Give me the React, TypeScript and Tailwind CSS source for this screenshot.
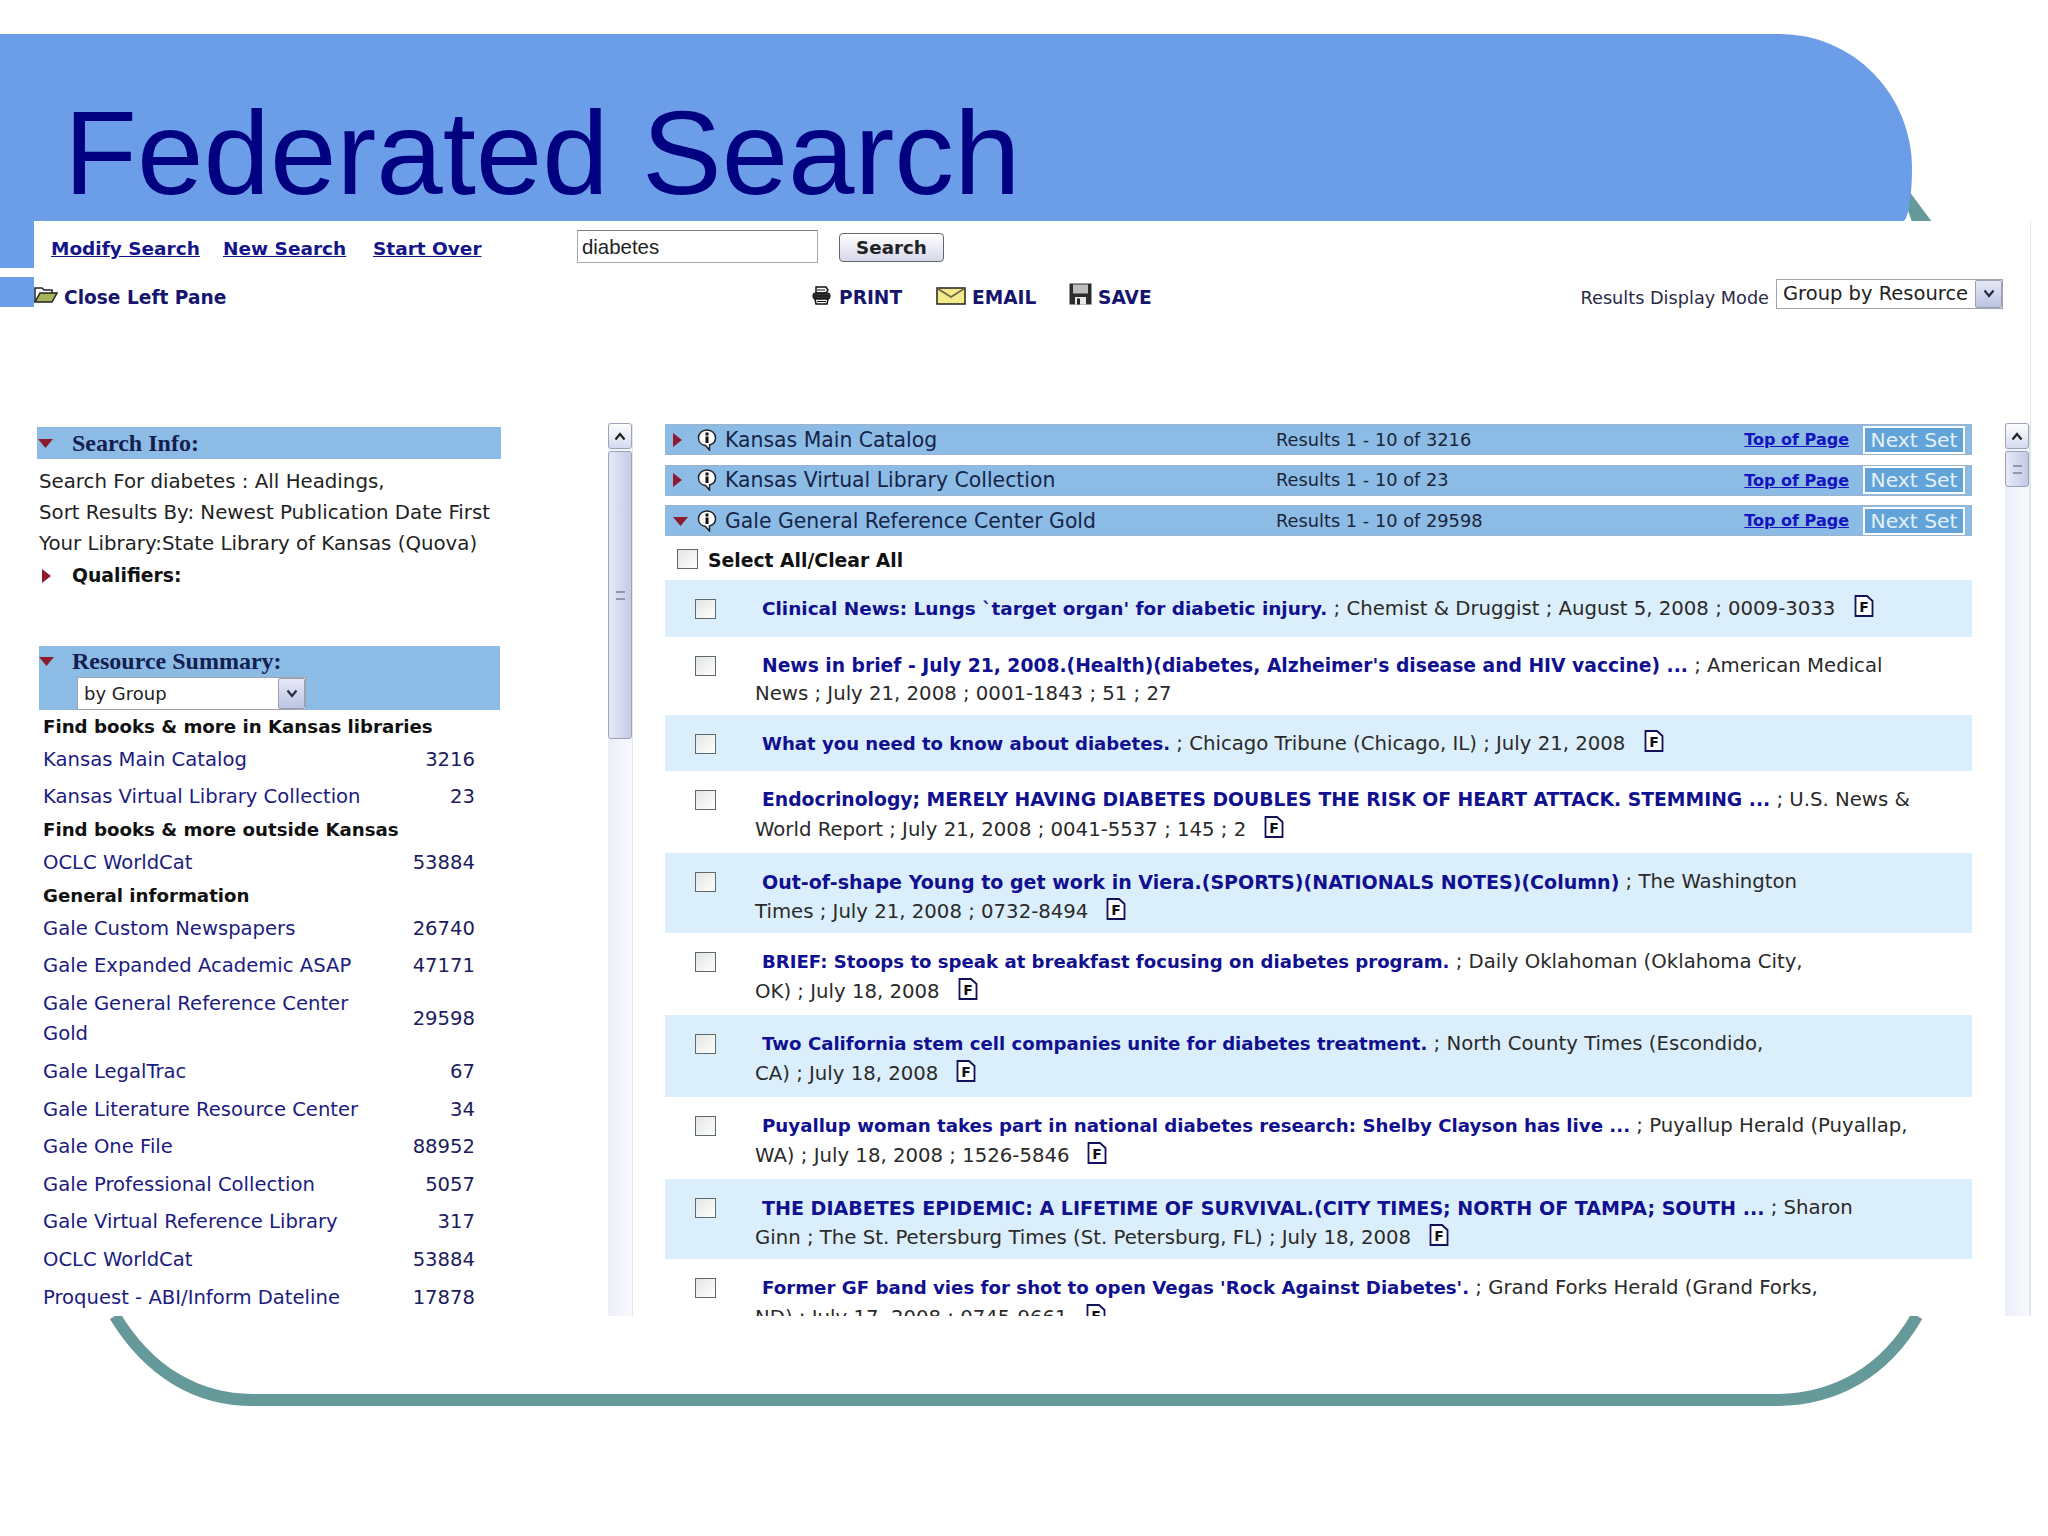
import React from "react";

const verdana = "font-['DejaVu_Sans',Verdana,sans-serif]";

const groups: { heading: string; h: string; links: { name: string[]; count: string; h?: string }[] }[] = [
  {
    heading: "Find books & more in Kansas libraries",
    h: "h-[31.5px] pt-[2px]",
    links: [
      { name: ["Kansas Main Catalog"], count: "3216", h: "h-[37px]" },
      { name: ["Kansas Virtual Library Collection"], count: "23", h: "h-[37px]" },
    ],
  },
  {
    heading: "Find books & more outside Kansas",
    h: "h-[29px]",
    links: [{ name: ["OCLC WorldCat"], count: "53884", h: "h-[36.5px]" }],
  },
  {
    heading: "General information",
    h: "h-[29px]",
    links: [
      { name: ["Gale Custom Newspapers"], count: "26740" },
      { name: ["Gale Expanded Academic ASAP"], count: "47171" },
      { name: ["Gale General Reference Center", "Gold"], count: "29598", h: "h-[68px]" },
      { name: ["Gale LegalTrac"], count: "67" },
      { name: ["Gale Literature Resource Center"], count: "34" },
      { name: ["Gale One File"], count: "88952" },
      { name: ["Gale Professional Collection"], count: "5057" },
      { name: ["Gale Virtual Reference Library"], count: "317" },
      { name: ["OCLC WorldCat"], count: "53884" },
      { name: ["Proquest - ABI/Inform Dateline"], count: "17878" },
    ],
  },
];

const bars = [
  { name: "Kansas Main Catalog", results: "Results 1 - 10 of 3216", open: false },
  { name: "Kansas Virtual Library Collection", results: "Results 1 - 10 of 23", open: false },
  { name: "Gale General Reference Center Gold", results: "Results 1 - 10 of 29598", open: true },
];

// title sizes differ a little per row, the capitals in the source run wider than DejaVu's
const rows = [
  { h: "h-[57px]", size: "text-[18.470px]", title: "Clinical News: Lungs `target organ' for diabetic injury.", rest: " ; Chemist & Druggist ; August 5, 2008 ; 0009-3033", doc: 1 },
  { h: "h-[78px]", size: "text-[18.730px]", title: "News in brief - July 21, 2008.(Health)(diabetes, Alzheimer's disease and HIV vaccine) ...", rest: " ; American Medical", line2: "News ; July 21, 2008 ; 0001-1843 ; 51 ; 27", doc: 0, tight: true },
  { h: "h-[56px]", size: "text-[18.080px]", title: "What you need to know about diabetes.", rest: " ; Chicago Tribune (Chicago, IL) ; July 21, 2008", doc: 1 },
  { h: "h-[82px]", size: "text-[18.770px]", title: "Endocrinology; MERELY HAVING DIABETES DOUBLES THE RISK OF HEART ATTACK. STEMMING ...", rest: " ; U.S. News &", line2: "World Report ; July 21, 2008 ; 0041-5537 ; 145 ; 2", doc: 2 },
  { h: "h-[80px]", size: "text-[19.060px]", title: "Out-of-shape Young to get work in Viera.(SPORTS)(NATIONALS NOTES)(Column)", rest: " ; The Washington", line2: "Times ; July 21, 2008 ; 0732-8494", doc: 2 },
  { h: "h-[82px]", size: "text-[18.120px]", title: "BRIEF: Stoops to speak at breakfast focusing on diabetes program.", rest: " ; Daily Oklahoman (Oklahoma City,", line2: "OK) ; July 18, 2008", doc: 2 },
  { h: "h-[82px]", size: "text-[18.140px]", title: "Two California stem cell companies unite for diabetes treatment.", rest: " ; North County Times (Escondido,", line2: "CA) ; July 18, 2008", doc: 2 },
  { h: "h-[82px]", size: "text-[18.200px]", title: "Puyallup woman takes part in national diabetes research: Shelby Clayson has live ...", rest: " ; Puyallup Herald (Puyallap,", line2: "WA) ; July 18, 2008 ; 1526-5846", doc: 2 },
  { h: "h-[80px]", size: "text-[19.070px]", title: "THE DIABETES EPIDEMIC: A LIFETIME OF SURVIVAL.(CITY TIMES; NORTH OF TAMPA; SOUTH ...", rest: " ; Sharon", line2: "Ginn ; The St. Petersburg Times (St. Petersburg, FL) ; July 18, 2008", doc: 2 },
  { h: "h-[82px]", size: "text-[18.200px]", title: "Former GF band vies for shot to open Vegas 'Rock Against Diabetes'.", rest: " ; Grand Forks Herald (Grand Forks,", line2: "ND) ; July 17, 2008 ; 0745-9661", doc: 2 },
];

function DownTri() {
  return (
    <svg width="16" height="10" viewBox="0 0 16 10" className="shrink-0">
      <path d="M0 1 L15 1 L7.500 10 Z" fill="#8c1c2c" />
    </svg>
  );
}

function RightTri() {
  return (
    <svg width="9" height="14" viewBox="0 0 9 14" className="shrink-0">
      <path d="M0 0 L9 7 L0 14 Z" fill="#8c1c2c" />
    </svg>
  );
}

function InfoIcon() {
  return (
    <svg width="20" height="22" viewBox="0 0 20 22" className="shrink-0">
      <path d="M10 1 C5 1 1.500 4.500 1.500 9 C1.500 13 4.500 16 8.500 16.500 L12.500 21 L12.500 16 C16 15 18.500 12.500 18.500 9 C18.500 4.500 15 1 10 1 Z" fill="#fff" stroke="#222" strokeWidth="1.500" />
      <rect x="8.500" y="3.500" width="3" height="3" fill="#111" />
      <rect x="8.500" y="7.500" width="3" height="6.500" fill="#111" />
    </svg>
  );
}

function DocIcon() {
  return (
    <svg width="20" height="22" viewBox="0 0 20 22" className="inline-block shrink-0">
      <path d="M1.500 1 L13 1 L18.500 6 L18.500 21 L1.500 21 Z" fill="#fff" stroke="#11115a" strokeWidth="1.800" />
      <text x="10" y="17" textAnchor="middle" fontSize="14" fontWeight="700" fontFamily="DejaVu Sans" fill="#111">F</text>
    </svg>
  );
}

function Checkbox() {
  return <span className="block w-[21px] h-[20px] border border-[#5a6a70] bg-gradient-to-br from-[#e4e4e0] to-white shrink-0" />;
}

function SelectArrow() {
  return (
    <span className="w-[27px] self-stretch flex items-center justify-center bg-gradient-to-b from-[#e6e8f6] to-[#bcc4e0] border border-[#9aa0b0] rounded-[2px]">
      <svg width="12" height="9" viewBox="0 0 12 9">
        <path d="M1.500 1.500 L6 7 L10.500 1.500" fill="none" stroke="#2a2a44" strokeWidth="2.200" />
      </svg>
    </span>
  );
}

function Scrollbar({ thumb }: { thumb: string }) {
  return (
    <div className="w-[25px] h-full flex flex-col bg-gradient-to-r from-[#eceff8] to-[#f8f9fd] border-r border-[#e4e6ee]">
      <div className="h-[26px] shrink-0 flex items-center justify-center bg-gradient-to-b from-white to-[#d4daf0] border border-[#9da3b4] rounded-[3px]">
        <svg width="12" height="9" viewBox="0 0 12 9">
          <path d="M1.500 7.500 L6 2 L10.500 7.500" fill="none" stroke="#222" strokeWidth="2.200" />
        </svg>
      </div>
      <div className={`${thumb} mt-[2px] shrink-0 flex items-center justify-center bg-gradient-to-r from-[#e6e9f8] to-[#c4cbe6] border border-[#9da3b4] rounded-[3px]`}>
        <span className="w-[9px] h-[9px] border-y-2 border-double border-[#9298ae]" />
      </div>
    </div>
  );
}

function Sidebar() {
  return (
    <div className="w-[574px] shrink-0 pt-[4px] pl-[3px]">
      <div className="w-[464px] h-[32px] bg-[#8cbce6] flex items-center">
        <span className="ml-[1px] w-[34px]"><DownTri /></span>
        <span className="font-['Liberation_Serif',serif] font-bold text-[24px] text-[#13204f]">Search Info:</span>
      </div>
      <div className={`${verdana} pt-[7px] pl-[2px] text-[19.800px] text-[#222] leading-[31px] whitespace-nowrap`}>
        <div>Search For diabetes : All Headings,</div>
        <div>Sort Results By: Newest Publication Date First</div>
        <div>Your Library:State Library of Kansas (Quova)</div>
        <div className="flex items-center font-bold text-[18.800px] text-[#111] pt-[1px]">
          <span className="w-[33px] pl-[3px]"><RightTri /></span>
          Qualifiers:
        </div>
      </div>
      <div className="mt-[55px] ml-[2px] w-[461px] h-[64px] bg-[#8cbce6]">
        <div className="flex items-center h-[30px]">
          <span className="w-[33px]"><DownTri /></span>
          <span className="font-['Liberation_Serif',serif] font-bold text-[24px] text-[#13204f]">Resource Summary:</span>
        </div>
        <div className="ml-[38px] mt-[1px] w-[229px] h-[33px] flex bg-white border border-[#a0a4ac]">
          <span className={`${verdana} flex-1 pl-[6px] text-[18px] leading-[32px] text-[#222]`}>by Group</span>
          <SelectArrow />
        </div>
      </div>
      <div className={`${verdana} ml-[2px] w-[436px] text-[19.600px] whitespace-nowrap`}>
        {groups.map((g) => (
          <div key={g.heading}>
            <div className={`${g.h} pl-[4px] flex items-center font-bold text-[18.200px] text-[#111]`}>{g.heading}</div>
            {g.links.map((l) => (
              <div key={l.count + l.name[0]} className={`${l.h ?? "h-[37.6px]"} pl-[4px] flex items-center justify-between leading-[30px]`}>
                <span className="text-[#1c1c80]">
                  {l.name.map((n) => (
                    <div key={n}>{n}</div>
                  ))}
                </span>
                <span className="text-[#1c1c5e]">{l.count}</span>
              </div>
            ))}
          </div>
        ))}
      </div>
    </div>
  );
}

function ResultBars() {
  return (
    <div className={`${verdana} flex flex-col gap-[9.500px] whitespace-nowrap`}>
      {bars.map((b) => (
        <div key={b.name} className="h-[31px] bg-[#8cbce6] border-y border-[#9cb2c8] flex items-center pl-[8px] pr-[7px]">
          <span className="w-[24px] flex items-center">{b.open ? <DownTri /> : <RightTri />}</span>
          <InfoIcon />
          <span className="ml-[8px] w-[551px] pt-[1px] text-[20.400px] text-[#162448]">{b.name}</span>
          <span className="pt-[1px] text-[17.800px] text-[#1c2438]">{b.results}</span>
          <a className="ml-auto pt-[1px] font-bold text-[16px] text-[#1414c0] underline">Top of Page</a>
          <span className="ml-[14px] w-[102px] h-[28px] border-2 border-white bg-[#62a3d8] text-[#e4f0fa] text-[20.300px] leading-[24px] text-center">Next Set</span>
        </div>
      ))}
    </div>
  );
}

function ResultRows() {
  return (
    <div className={`${verdana} whitespace-nowrap text-[19.700px] text-[#2a2a2a]`}>
      <div className="h-[44px] pt-[13px] pl-[12px] flex items-start">
        <Checkbox />
        <span className="ml-[10px] font-bold text-[18.800px] leading-[24px] text-[#111]">Select All/Clear All</span>
      </div>
      {rows.map((r, i) => (
        <div key={r.title} className={`${r.h} flex pl-[30px] ${i % 2 === 0 ? "bg-[#dbeefb]" : "bg-white"}`}>
          <span className="pt-[19px]"><Checkbox /></span>
          <div className="ml-[39px] pt-[14px] leading-[30px]">
            <div className="flex items-center pl-[7px]">
              <span className={`${r.size} font-bold text-[#101090]`}>{r.title}</span>
              <span className="whitespace-pre">{r.rest}</span>
              {r.doc === 1 && <span className="ml-[19px] -mt-[6px] flex"><DocIcon /></span>}
            </div>
            {r.line2 && (
              <div className={`flex items-center ${r.tight ? "-mt-[2px]" : ""}`}>
                <span>{r.line2}</span>
                {r.doc === 2 && <span className="ml-[18px] -mt-[6px] flex"><DocIcon /></span>}
              </div>
            )}
          </div>
        </div>
      ))}
    </div>
  );
}

function Toolbar() {
  return (
    <div className={`${verdana} h-[202px] shrink-0 whitespace-nowrap`}>
      <div className="h-[56px] pl-[17px] flex items-center font-bold text-[18.500px] text-[#15158a]">
        <a className="w-[172px] underline">Modify Search</a>
        <a className="w-[150px] underline">New Search</a>
        <a className="w-[204px] underline">Start Over</a>
        <span className="w-[241px] h-[33px] -mt-[5px] pl-[4px] border border-[#a8a8a8] border-t-[#808080] font-['Liberation_Sans',sans-serif] font-normal text-[20.400px] leading-[32px] text-[#222]">diabetes</span>
        <button className="ml-[21px] w-[105px] h-[29px] -mt-[3px] pt-[1px] rounded-[4px] border border-[#666] bg-gradient-to-b from-white to-[#d6d8ea] text-[18.300px] font-bold text-[#222] leading-none">Search</button>
      </div>
      <div className="h-[42px] flex items-center font-bold text-[18.600px] text-[#15156e]">
        <svg width="24" height="18" viewBox="0 0 24 18" className="-mt-[6px]">
          <path d="M1 16 L1 2 L8 2 L10 4 L18 4 L18 7" fill="#fff" stroke="#222" strokeWidth="1.500" />
          <path d="M1 16 L6 7 L23 7 L18 16 Z" fill="#a8b45a" stroke="#222" strokeWidth="1.500" />
        </svg>
        <span className="ml-[6px] w-[748px]">Close Left Pane</span>
        <svg width="19" height="19" viewBox="0 0 19 19" className="-mt-[6px]">
          <path d="M4 1 L14 1 L16 4 L14 7 L4 7 Z" fill="#fff" stroke="#111" strokeWidth="1.500" />
          <rect x="1" y="7" width="17" height="6" rx="2" fill="#333" stroke="#111" />
          <path d="M3 13 L16 13 L15 18 L4 18 Z" fill="#fff" stroke="#111" strokeWidth="1.500" />
          <path d="M5 4 L13 4 M2 10 L17 10 M5 15.500 L14 15.500" stroke="#111" strokeWidth="1.200" />
        </svg>
        <span className="ml-[8px] w-[97px]">PRINT</span>
        <svg width="30" height="18" viewBox="0 0 30 18" className="-mt-[4px]">
          <rect x="1" y="1" width="28" height="16" fill="#f2e88c" stroke="#222" strokeWidth="1.500" />
          <path d="M1.500 1.500 L15 10 L28.500 1.500" fill="none" stroke="#6a6440" strokeWidth="1.500" />
        </svg>
        <span className="ml-[6px] w-[97px]">EMAIL</span>
        <svg width="23" height="22" viewBox="0 0 23 22" className="-mt-[8px]">
          <rect x="0.500" y="0.500" width="22" height="21" fill="#2c2c2c" />
          <rect x="4" y="1.500" width="15" height="9" fill="#bdbdbd" />
          <rect x="6" y="14" width="11" height="7.500" fill="#e8e8e8" />
          <rect x="8" y="15.500" width="3" height="6" fill="#222" />
        </svg>
        <span className="ml-[6px]">SAVE</span>
        <span className="ml-auto font-normal text-[17.700px] text-[#2a2a44]">Results Display Mode</span>
        <div className="ml-[7px] mr-[27px] -mt-[9px] w-[227px] h-[30px] flex bg-white border border-[#a0a4ac]">
          <span className="flex-1 pl-[6px] font-normal text-[19.500px] leading-[28px] text-[#222]">Group by Resource</span>
          <SelectArrow />
        </div>
      </div>
    </div>
  );
}

export default function App() {
  return (
    <div className="relative w-[2048px] h-[1536px] overflow-hidden bg-white pt-[34px]">
      {/* outline of the slide, only the bits that show around the frame */}
      <svg width="2048" height="1536" viewBox="0 0 2048 1536" className="absolute left-0 top-0">
        <path d="M115 1316 C149 1372 197 1400 253 1400 L1775 1400 C1835 1400 1885 1372 1917 1316" fill="none" stroke="#669999" strokeWidth="12" />
        <path d="M1906 187 L1932 222 L1912 222 L1906 205 Z" fill="#669999" />
      </svg>

      <div className="relative w-[1912px] h-[187px] bg-[#6b9de8] rounded-tr-[132px_134px] rounded-br-[9px_53px] pl-[64px] pt-[59px]">
        <h1 className="font-['Liberation_Sans',Arial,sans-serif] text-[119.500px] leading-[119px] text-[#000080] whitespace-nowrap">Federated Search</h1>
      </div>

      <div className="relative flex">
        <div className="w-[34px] shrink-0">
          <div className="h-[47px] bg-[#6b9de8]" />
          <div className="mt-[9px] h-[30px] bg-[#6b9de8]" />
        </div>
        <div className="w-[1997px] h-[1095px] overflow-hidden bg-white flex flex-col border-r border-[#e6e6e6]">
          <Toolbar />
          <div className="flex h-[893px] overflow-hidden">
            <Sidebar />
            <Scrollbar thumb="h-[288px]" />
            <div className="ml-[32px] w-[1307px] shrink-0 pt-[1px]">
              <ResultBars />
              <ResultRows />
            </div>
            <div className="ml-[33px]">
              <Scrollbar thumb="h-[36px]" />
            </div>
          </div>
        </div>
      </div>
    </div>
  );
}
